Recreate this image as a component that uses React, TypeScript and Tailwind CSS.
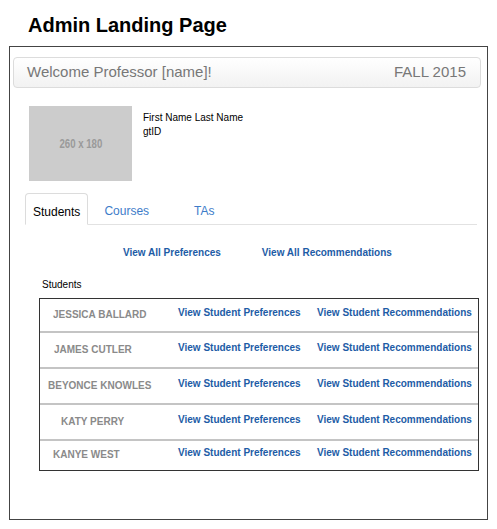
const students = [
  { name: 'JESSICA BALLARD', pad: 'pl-[13px]', h: 'h-[32px]' },
  { name: 'JAMES CUTLER', pad: 'pl-[14px]', h: 'h-[36px] border-t-2' },
  { name: 'BEYONCE KNOWLES', pad: 'pl-[8px]', h: 'h-[36px] border-t-2' },
  { name: 'KATY PERRY', pad: 'pl-[21px]', h: 'h-[36px] border-t-2' },
  { name: 'KANYE WEST', pad: 'pl-[13px]', h: 'h-[31px] border-t-2' },
];

const StudentRow = ({ name, pad, h }: { name: string; pad: string; h: string }) => (
  <div className={`flex items-center border-[#c4c4c4] ${h}`}>
    <div className={`w-[138px] pb-[2px] text-[10px] font-bold text-[#8a8a8a] ${pad}`}>{name}</div>
    <a className="w-[139px] pb-[6px] text-[10px] font-bold text-[#1d5ca6]">View Student Preferences</a>
    <a className="pb-[6px] text-[10px] font-bold text-[#1d5ca6]">View Student Recommendations</a>
  </div>
);

export default function App() {
  return (
    <div className="w-[497px] h-[529px] bg-white font-['Liberation_Sans',Arial,sans-serif] text-black">
      <h1 className="pt-[11px] pl-[28px] text-[20px] leading-[28px] font-bold">Admin Landing Page</h1>

      <div className="ml-[9px] mt-[7px] w-[479px] h-[474px] border border-[#444]">
        {/* welcome bar */}
        <div className="ml-[3px] mt-[10px] flex h-[31px] w-[468px] items-center justify-between rounded-[4px] border border-[#dcdcdc] bg-gradient-to-b from-white to-[#f2f2f2] px-[13px] text-[15px] text-[#777]">
          <span>Welcome Professor [name]!</span>
          <span className="pr-[1px]">FALL 2015</span>
        </div>

        {/* profile */}
        <div className="ml-[19px] mt-[18px] flex">
          <div className="flex h-[75px] w-[103px] items-center justify-center bg-[#cccccc]">
            <span className="scale-x-[0.74] text-[13px] font-bold text-[#9a9a9a]">260 x 180</span>
          </div>
          <div className="ml-[11px] mt-[5px] text-[10px] leading-[14px]">
            <div>First Name Last Name</div>
            <div>gtID</div>
          </div>
        </div>

        {/* tabs */}
        <div className="ml-[15px] mt-[12px] flex w-[452px] border-b border-[#e2e2e2] text-[12px] leading-[14px]">
          <button className="-mb-px rounded-t-[4px] border border-[#dcdcdc] border-b-white bg-white px-[7px] pt-[10px] pb-[5px] text-black">
            Students
          </button>
          <button className="ml-[8px] border border-transparent px-[7px] pt-[10px] pb-[5px] text-[#3d7cc9]">Courses</button>
          <button className="ml-[29px] border border-transparent px-[7px] pt-[10px] pb-[5px] text-[#3d7cc9]">TAs</button>
        </div>

        <div className="ml-[113px] mt-[22px] flex gap-[41px] text-[10px] leading-[12px] font-bold text-[#1d5ca6]">
          <a>View All Preferences</a>
          <a>View All Recommendations</a>
        </div>

        <div className="ml-[32px] mt-[20px] text-[10px] leading-[12px]">Students</div>

        <div className="ml-[29px] mt-[7px] w-[440px] border border-[#333]">
          {students.map((s) => (
            <StudentRow key={s.name} {...s} />
          ))}
        </div>
      </div>
    </div>
  );
}
